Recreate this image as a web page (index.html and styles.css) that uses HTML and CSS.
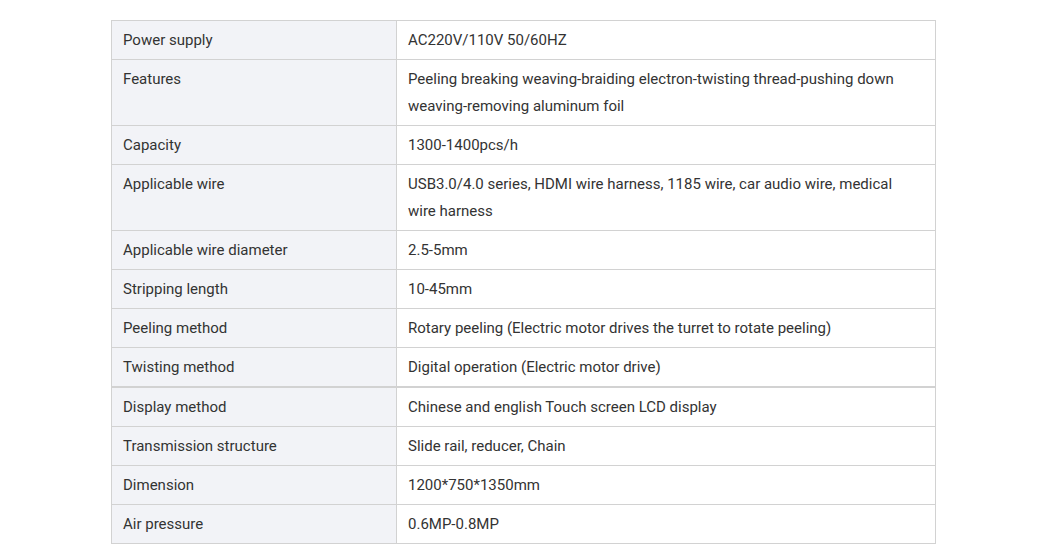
FILE: index.html
```html
<!DOCTYPE html>
<html>
<head>
<meta charset="utf-8">
<link rel="stylesheet" href="styles.css">
</head>
<body>
<table class="spec">
  <tbody>
    <tr><td class="k">Power supply</td><td class="v">AC220V/110V 50/60HZ</td></tr>
    <tr><td class="k">Features</td><td class="v">Peeling breaking weaving-braiding electron-twisting thread-pushing down weaving-removing aluminum foil</td></tr>
    <tr><td class="k">Capacity</td><td class="v">1300-1400pcs/h</td></tr>
    <tr><td class="k">Applicable wire</td><td class="v">USB3.0/4.0 series, HDMI wire harness, 1185 wire, car audio wire, medical wire harness</td></tr>
    <tr><td class="k">Applicable wire diameter</td><td class="v">2.5-5mm</td></tr>
    <tr><td class="k">Stripping length</td><td class="v">10-45mm</td></tr>
    <tr><td class="k">Peeling method</td><td class="v">Rotary peeling (Electric motor drives the turret to rotate peeling)</td></tr>
    <tr><td class="k">Twisting method</td><td class="v">Digital operation (Electric motor drive)</td></tr>
  </tbody>
  <tbody class="second">
    <tr><td class="k">Display method</td><td class="v">Chinese and english Touch screen LCD display</td></tr>
    <tr><td class="k">Transmission structure</td><td class="v">Slide rail, reducer, Chain</td></tr>
    <tr><td class="k">Dimension</td><td class="v">1200*750*1350mm</td></tr>
    <tr><td class="k">Air pressure</td><td class="v">0.6MP-0.8MP</td></tr>
  </tbody>
</table>
</body>
</html>
```

FILE: styles.css
```css
html, body {
  margin: 0;
  background: #ffffff;
}
body {
  padding: 20px 0 0 111px;
  font-family: Roboto, "Liberation Sans", sans-serif;
  font-size: 15px;
  color: #333333;
}
.spec {
  width: 825px;
  border-collapse: collapse;
  table-layout: fixed;
}
.spec td {
  border: 1px solid #d2d2d2;
  line-height: 27px;
  padding: 6px 12px 5px 11px;
  vertical-align: top;
  text-align: left;
}
.spec td.k {
  width: 262px;
  padding-right: 11px;
  background: #f2f3f7;
}
.spec td.v {
  background: #ffffff;
}
.spec tbody.second tr:first-child td {
  border-top: 2px solid #d2d2d2;
}
```
